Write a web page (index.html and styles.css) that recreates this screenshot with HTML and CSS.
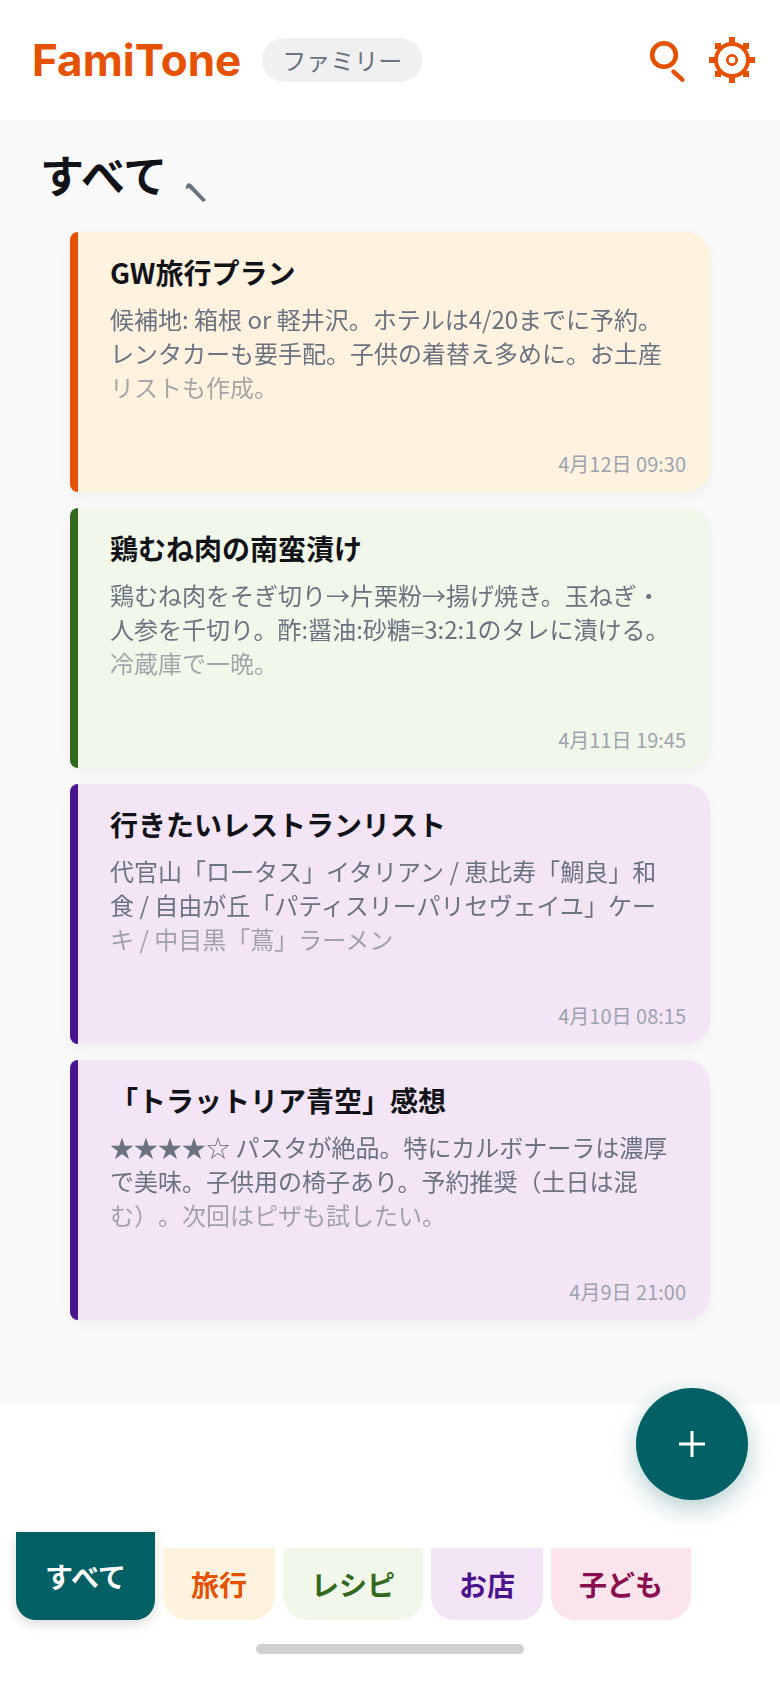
FILE: index.html
```html
<!DOCTYPE html>
<html lang="ja">
  <head>
    <meta charset="utf-8">
    <title>FamiTone</title>
    <meta name="viewport" content="width=device-width, initial-scale=1">
    <link rel="stylesheet" href="styles.css">
  </head>
  <body>
    <div class="app">
      <header class="topbar">
        <div class="brand">FamiTone</div>
        <div class="family">ファミリー</div>
        <div class="actions">
          <svg class="icon" width="48" height="48" viewBox="0 0 48 48" aria-label="検索">
            <circle cx="16" cy="19" r="11.8" fill="none" stroke="#e65100" stroke-width="4.6"/>
            <line x1="25.4" y1="35.6" x2="34.4" y2="43.7" stroke="#e65100" stroke-width="4.4" stroke-linecap="round"/>
          </svg>
          <svg class="icon" width="48" height="48" viewBox="0 0 48 48" aria-label="設定">
            <g fill="#e65100">
              <rect x="21" y="1" width="6" height="46"/>
              <rect x="1" y="21" width="46" height="6"/>
              <rect x="7" y="7" width="6" height="6"/>
              <rect x="35" y="7" width="6" height="6"/>
              <rect x="7" y="35" width="6" height="6"/>
              <rect x="35" y="35" width="6" height="6"/>
            </g>
            <circle cx="24" cy="24" r="16" fill="#fff" stroke="#e65100" stroke-width="4"/>
            <circle cx="24" cy="24" r="4.7" fill="none" stroke="#e65100" stroke-width="2.8"/>
          </svg>
        </div>
      </header>

      <main class="content">
        <div class="heading">
          <h1>すべて</h1>
          <svg class="pencil" width="24" height="24" viewBox="0 0 24 24">
            <path d="M3 6 L5 3 L8 4 L23 20 L20 22 L6 8 L3 9 Z" fill="#6b7280"/>
          </svg>
        </div>

        <div class="notes">
          <article class="note note-travel">
            <h2>GW旅行プラン</h2>
            <p>候補地: 箱根 or 軽井沢。ホテルは4/20までに予約。レンタカーも要手配。子供の着替え多めに。お土産リストも作成。</p>
            <time>4月12日 09:30</time>
          </article>
          <article class="note note-recipe">
            <h2>鶏むね肉の南蛮漬け</h2>
            <p>鶏むね肉をそぎ切り→片栗粉→揚げ焼き。玉ねぎ・人参を千切り。酢:醤油:砂糖=3:2:1のタレに漬ける。冷蔵庫で一晩。</p>
            <time>4月11日 19:45</time>
          </article>
          <article class="note note-shop">
            <h2>行きたいレストランリスト</h2>
            <p>代官山「ロータス」イタリアン / 恵比寿「鯛良」和食 / 自由が丘「パティスリーパリセヴェイユ」ケーキ / 中目黒「蔦」ラーメン</p>
            <time>4月10日 08:15</time>
          </article>
          <article class="note note-shop">
            <h2>「トラットリア青空」感想</h2>
            <p>★★★★☆ パスタが絶品。特にカルボナーラは濃厚で美味。子供用の椅子あり。予約推奨（土日は混む）。次回はピザも試したい。</p>
            <time>4月9日 21:00</time>
          </article>
        </div>
      </main>

      <button class="fab" aria-label="追加">
        <svg width="28" height="28" viewBox="0 0 28 28">
          <path d="M14 1V27M1 14H27" stroke="#fff" stroke-width="3"/>
        </svg>
      </button>

      <nav class="tabs">
        <div class="tab tab-active">すべて</div>
        <div class="tab tab-travel">旅行</div>
        <div class="tab tab-recipe">レシピ</div>
        <div class="tab tab-shop">お店</div>
        <div class="tab tab-kids">子ども</div>
      </nav>
      <div class="home-bar"></div>
    </div>
  </body>
</html>
```

FILE: styles.css
```css
* {
  box-sizing: border-box;
}
body {
  margin: 0;
  background: #fff;
  font-family: "Noto Sans CJK JP", "Noto Sans", sans-serif;
}
.app {
  position: relative;
  width: 780px;
  height: 1688px;
  overflow: hidden;
  display: flex;
  flex-direction: column;
}

/* top bar */
.topbar {
  height: 120px;
  padding: 0 24px 0 32px;
  display: flex;
  align-items: center;
  background: #fff;
}
.brand {
  font-family: Inter, sans-serif;
  font-weight: 700;
  font-size: 44px;
  color: #e65100;
}
.family {
  margin-left: 21px;
  height: 44px;
  line-height: 44px;
  padding: 0 20px;
  border-radius: 22px;
  background: #f0f0f0;
  color: #6b7280;
  font-size: 24px;
}
.actions {
  margin-left: auto;
  display: flex;
  gap: 12px;
}
.icon {
  display: block;
}

/* notes */
.content {
  height: 1284px;
  background: #fafafa;
}
.heading {
  height: 112px;
  padding: 24px 0 0 40px;
  display: flex;
}
.heading h1 {
  margin: 0;
  font-size: 44px;
  line-height: 60px;
  font-weight: 700;
  color: #111318;
}
.pencil {
  margin: 36px 0 0 16px;
}
.notes {
  margin-left: 70px;
  width: 640px;
  display: flex;
  flex-direction: column;
  gap: 16px;
}
.note {
  height: 260px;
  padding: 20px 24px 0 32px;
  border-left: 8px solid;
  border-radius: 8px 24px 24px 8px;
  box-shadow: 0 4px 16px rgba(0, 0, 0, 0.05);
  display: flex;
  flex-direction: column;
}
.note h2 {
  margin: 0;
  font-size: 28px;
  line-height: 40px;
  font-weight: 700;
  color: #111318;
}
.note p {
  margin: 10px 8px 0 0;
  height: 102px;
  font-size: 24px;
  line-height: 34px;
  color: #6b7280;
  text-spacing-trim: space-all;
  mask-image: linear-gradient(to bottom, #000 68px, rgba(0, 0, 0, 0.6) 68px);
}
.note time {
  margin-top: auto;
  margin-bottom: 13px;
  text-align: right;
  font-size: 20px;
  line-height: 30px;
  color: #9ca3af;
}
.note-travel {
  background: #fff3e0;
  border-left-color: #e65100;
}
.note-recipe {
  background: #f1f8e9;
  border-left-color: #33691e;
}
.note-shop {
  background: #f3e5f5;
  border-left-color: #4a148c;
}

/* floating add button */
.fab {
  position: absolute;
  left: 636px;
  top: 1388px;
  width: 112px;
  height: 112px;
  padding: 0;
  border: none;
  border-radius: 50%;
  background: #006064;
  box-shadow: 0 8px 24px rgba(0, 96, 100, 0.3);
  display: flex;
  align-items: center;
  justify-content: center;
}

/* category tabs */
.tabs {
  margin-top: 128px;
  padding-left: 16px;
  display: flex;
  align-items: flex-end;
  gap: 8px;
}
.tab {
  height: 72px;
  padding: 0 28px;
  border-radius: 0 0 24px 24px;
  font-size: 28px;
  font-weight: 700;
  line-height: 72px;
}
.tab-active {
  height: 88px;
  line-height: 88px;
  padding: 0 29px;
  border-radius: 0 0 20px 20px;
  background: #006064;
  color: #fff;
  box-shadow: 0 4px 12px rgba(0, 0, 0, 0.15);
}
.tab-travel {
  background: #fff3e0;
  color: #e65100;
}
.tab-recipe {
  background: #f1f8e9;
  color: #33691e;
}
.tab-shop {
  background: #f3e5f5;
  color: #4a148c;
}
.tab-kids {
  background: #fce4ec;
  color: #880e4f;
}
.home-bar {
  margin: 24px 0 0 256px;
  width: 268px;
  height: 10px;
  border-radius: 5px;
  background: #d0d0d0;
}
```
